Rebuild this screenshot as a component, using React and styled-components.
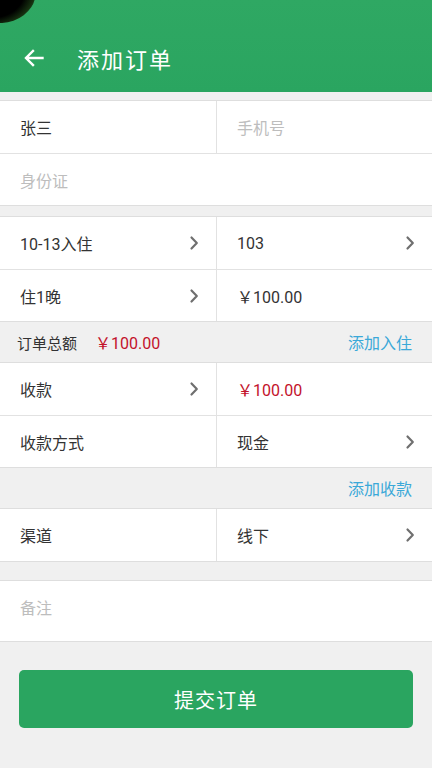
import React from "react";
import styled, { createGlobalStyle } from "styled-components";

const Global = createGlobalStyle`
  html, body { margin: 0; padding: 0; background: #f0f0f0; }
  body { font-family: "Noto Sans CJK SC", "Noto Sans", Roboto, sans-serif; }
  * { box-sizing: border-box; }
`;

const Page = styled.div`
  width: 432px;
  min-height: 768px;
  background: #f0f0f0;
  display: flex;
  flex-direction: column;
`;

const Header = styled.div`
  position: relative;
  height: 92px;
  padding-top: 24px;
  background: linear-gradient(180deg, #2fa863 0%, #2aa560 100%);
  overflow: hidden;
`;

const Blob = styled.div`
  position: absolute;
  left: -24px;
  top: -22px;
  width: 60px;
  height: 44px;
  border-radius: 50%;
  background: radial-gradient(ellipse at 40% 40%, #000 50%, #163010 72%, rgba(40,120,40,0) 100%);
  transform: rotate(-20deg);
`;

const Toolbar = styled.div`
  height: 68px;
  display: flex;
  align-items: center;
  padding-left: 22px;
  gap: 31px;
`;

const Title = styled.div`
  color: #fff;
  font-size: 22px;
  letter-spacing: 2px;
`;

const Section = styled.div`
  background: #fff;
  border-top: 1px solid #dedede;
  border-bottom: 1px solid #dedede;
  margin-top: ${(p) => p.$mt || 0}px;
`;

const Row = styled.div`
  display: flex;
  height: ${(p) => p.$h || 52}px;
  & + & { border-top: 1px solid #e2e2e2; }
`;

const Cell = styled.div`
  flex: ${(p) => (p.$full ? "1 1 auto" : "0 0 216px")};
  width: ${(p) => (p.$full ? "auto" : "216px")};
  display: flex;
  align-items: ${(p) => (p.$top ? "flex-start" : "center")};
  padding: ${(p) => (p.$top ? "14px 20px 0 20px" : p.$right ? "0 17px 0 20px" : "0 17px 0 20px")};
  border-left: ${(p) => (p.$right ? "1px solid #e2e2e2" : "none")};
`;

const Text = styled.span`
  flex: 1;
  font-size: 16px;
  color: ${(p) => (p.$tone === "hint" ? "#bdbdbd" : p.$tone === "red" ? "#c3122a" : "#333")};
  font-family: "Roboto", "Noto Sans CJK SC", sans-serif;
`;

const Bar = styled.div`
  height: ${(p) => p.$h || 40}px;
  display: flex;
  align-items: center;
  padding: 0 20px 0 17px;
  gap: 18px;
`;

const BarLabel = styled.span`
  font-size: 15px;
  color: #333;
`;

const BarAmount = styled.span`
  font-size: 16px;
  color: #c3122a;
  font-family: "Roboto", "Noto Sans CJK SC", sans-serif;
`;

const Link = styled.span`
  margin-left: auto;
  font-size: 16px;
  color: #3aa8d8;
`;

const Submit = styled.button`
  margin: 28px 19px 0 19px;
  height: 58px;
  border: none;
  border-radius: 5px;
  background: #2aa560;
  color: #fff;
  font-size: 20px;
  font-family: "Noto Sans CJK SC", sans-serif;
  letter-spacing: 1px;
`;

const Chevron = () => (
  <svg width="10" height="16" viewBox="0 0 10 16">
    <path d="M2.5 2.5 L7.8 8 L2.5 13.5" fill="none" stroke="#6f6f6f" strokeWidth="2.2" strokeLinecap="round" strokeLinejoin="round" />
  </svg>
);

const Back = () => (
  <svg width="24" height="24" viewBox="0 0 24 24">
    <path d="M20.5 12 H4.5 M11 5 L4 12 L11 19" fill="none" stroke="#fff" strokeWidth="2.4" strokeLinecap="square" />
  </svg>
);

export default function App() {
  return (
    <Page>
      <Global />
      <Header>
        <Blob />
        <Toolbar>
          <Back />
          <Title>添加订单</Title>
        </Toolbar>
      </Header>

      <Section $mt={8}>
        <Row>
          <Cell><Text>张三</Text></Cell>
          <Cell $right $full><Text $tone="hint">手机号</Text></Cell>
        </Row>
        <Row>
          <Cell $full><Text $tone="hint">身份证</Text></Cell>
        </Row>
      </Section>

      <Section $mt={10}>
        <Row>
          <Cell><Text>10-13入住</Text><Chevron /></Cell>
          <Cell $right $full><Text>103</Text><Chevron /></Cell>
        </Row>
        <Row>
          <Cell><Text>住1晚</Text><Chevron /></Cell>
          <Cell $right $full><Text>￥100.00</Text></Cell>
        </Row>
      </Section>

      <Bar>
        <BarLabel>订单总额</BarLabel>
        <BarAmount>￥100.00</BarAmount>
        <Link>添加入住</Link>
      </Bar>

      <Section>
        <Row>
          <Cell><Text>收款</Text><Chevron /></Cell>
          <Cell $right $full><Text $tone="red">￥100.00</Text></Cell>
        </Row>
        <Row>
          <Cell><Text>收款方式</Text></Cell>
          <Cell $right $full><Text>现金</Text><Chevron /></Cell>
        </Row>
      </Section>

      <Bar>
        <Link>添加收款</Link>
      </Bar>

      <Section>
        <Row>
          <Cell><Text>渠道</Text></Cell>
          <Cell $right $full><Text>线下</Text><Chevron /></Cell>
        </Row>
      </Section>

      <Section $mt={18}>
        <Row $h={60}>
          <Cell $full $top><Text $tone="hint">备注</Text></Cell>
        </Row>
      </Section>

      <Submit>提交订单</Submit>
    </Page>
  );
}
